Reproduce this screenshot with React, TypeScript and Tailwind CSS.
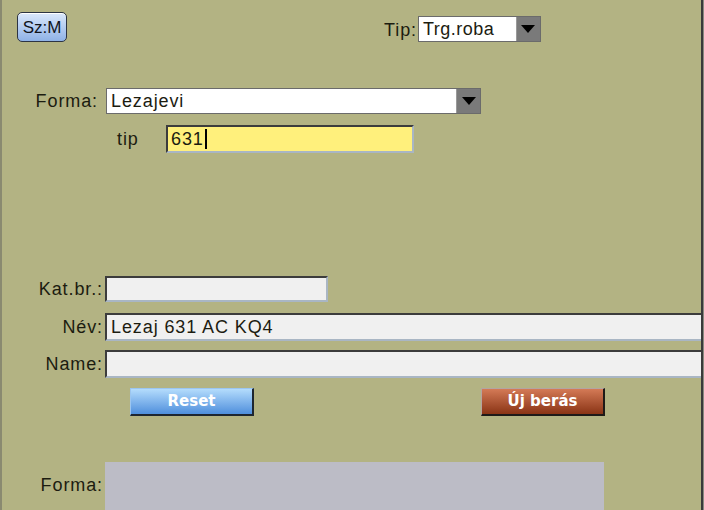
export default function App() {
  const font = "font-['Liberation_Sans',Arial,sans-serif]";
  const inset =
    "border-2 border-t-[#3c3c3c] border-l-[#3c3c3c] border-b-[#a9b6c4] border-r-[#a9b6c4]";
  const label = "shrink-0 w-[101px] text-right";

  return (
    <div
      className={`relative w-[704px] h-[510px] overflow-hidden bg-[#b3b383] border-l-2 border-l-[#8a8a70] text-[18px] tracking-[0.9px] text-[#1c1c10] flex flex-col ${font}`}
    >
      {/* right frame edge */}
      <div className="absolute right-0 top-0 bottom-0 w-[3px] bg-[#3a3a3a] border-r border-[#8a8a80]" />

      {/* top row */}
      <div className="flex items-end mt-[12px] h-[30px]">
        <button className="ml-[15px] w-[50px] h-[30px] rounded-[5px] border border-[#2c3444] bg-gradient-to-b from-[#dbe8fb] to-[#8fb2e6] text-[17px] tracking-normal leading-none text-[#10141c] shadow-[inset_0_1px_0_#fff]">
          Sz:M
        </button>
        <span className="ml-[317px] mr-[1px] mb-[3px] leading-none">Tip:</span>
        <div className="flex h-[26px] w-[123px] border border-[#6b6b6b]">
          <div className="flex-1 bg-white pl-[4px] leading-[24px] tracking-[0.5px]">Trg.roba</div>
          <div className="w-[24px] bg-[#7a7a7a] flex items-center justify-center border-l border-[#9a9a9a]">
            <svg width="14" height="8" viewBox="0 0 14 8">
              <path d="M0 0h14L7 8z" fill="#000" />
            </svg>
          </div>
        </div>
      </div>

      {/* Forma select */}
      <div className="flex items-center mt-[46px] h-[26px]">
        <span className="shrink-0 w-[96px] text-right">Forma:</span>
        <div className="ml-[8px] flex h-[26px] w-[375px] border border-[#6b6b6b]">
          <div className="flex-1 bg-white pl-[4px] leading-[24px]">Lezajevi</div>
          <div className="w-[24px] bg-[#7a7a7a] flex items-center justify-center border-l border-[#9a9a9a]">
            <svg width="14" height="8" viewBox="0 0 14 8">
              <path d="M0 0h14L7 8z" fill="#000" />
            </svg>
          </div>
        </div>
      </div>

      {/* tip input */}
      <div className="flex items-center mt-[11px] h-[28px]">
        <span className="shrink-0 ml-[115px] w-[49px]">tip</span>
        <div className={`w-[248px] h-[28px] bg-[#fff07c] pl-[3px] leading-[24px] flex items-center ${inset}`}>
          631<span className="inline-block w-[2px] h-[20px] bg-black ml-[1px]" />
        </div>
      </div>

      {/* Kat.br. */}
      <div className="flex items-center mt-[123px] h-[26px]">
        <span className={label}>Kat.br.:</span>
        <div className={`ml-[2px] shrink-0 w-[223px] h-[26px] bg-[#f0f0f0] ${inset}`} />
      </div>

      {/* Név */}
      <div className="flex items-center mt-[11px] h-[28px]">
        <span className={label}>Név:</span>
        <div className={`ml-[2px] shrink-0 w-[620px] h-[28px] bg-[#f0f0f0] pl-[4px] leading-[24px] ${inset}`}>
          Lezaj 631 AC KQ4
        </div>
      </div>

      {/* Name */}
      <div className="flex items-center mt-[9px] h-[28px]">
        <span className={label}>Name:</span>
        <div className={`ml-[2px] shrink-0 w-[620px] h-[28px] bg-[#f0f0f0] ${inset}`} />
      </div>

      {/* buttons */}
      <div className="flex mt-[10px] h-[28px] font-['DejaVu_Sans',Verdana,sans-serif] font-bold text-[15px] tracking-normal text-white [text-shadow:1px_1px_0_#1a1a1a]">
        <button className="ml-[128px] w-[124px] h-[28px] bg-gradient-to-b from-[#b4dcfc] to-[#4f8fdc] border-t border-l border-t-[#9cc6f0] border-l-[#9cc6f0] border-b-2 border-r-2 border-b-[#1e2630] border-r-[#1e2630]">
          Reset
        </button>
        <button className="ml-[227px] w-[124px] h-[28px] bg-gradient-to-b from-[#d47a56] to-[#8a3414] border-t border-l border-t-[#b4a4a0] border-l-[#b4a4a0] border-b-2 border-r-2 border-b-[#1e1a18] border-r-[#1e1a18]">
          Új berás
        </button>
      </div>

      {/* Forma bottom */}
      <div className="flex mt-[46px] h-[60px]">
        <span className={`${label} mt-[10px]`}>Forma:</span>
        <div className="ml-[2px] w-[499px] h-[60px] bg-[#bcbcc6]" />
      </div>
    </div>
  );
}
